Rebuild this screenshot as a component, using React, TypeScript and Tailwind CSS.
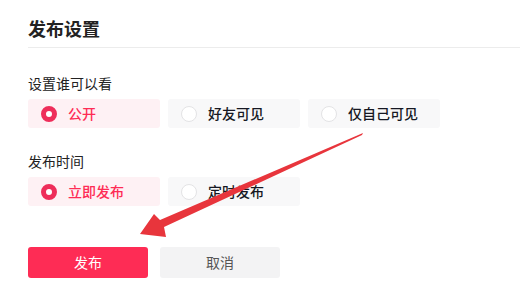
import React, { useState } from 'react';

const font = { fontFamily: '"Noto Sans CJK SC", "Noto Sans", sans-serif' };

interface Option {
  value: string;
  label: string;
}

function RadioGroup({ options, value, onChange }: { options: Option[]; value: string; onChange: (v: string) => void }) {
  return (
    <div className="flex gap-2">
      {options.map((opt) => {
        const active = opt.value === value;
        return (
          <button
            key={opt.value}
            onClick={() => onChange(opt.value)}
            className={`flex items-center w-[132px] h-[29px] rounded-[3px] pl-[13px] text-[14px] font-medium ${
              active ? 'bg-[#fef1f4] text-[#fe2c55]' : 'bg-[#f8f8f9] text-[#161823]'
            }`}
          >
            <span
              className={`w-4 h-4 rounded-full flex-shrink-0 mr-[11px] ${
                active ? 'border-[5px] border-[#ee2e5a] bg-white' : 'border border-[#e3e3e5] bg-white'
              }`}
            />
            {opt.label}
          </button>
        );
      })}
    </div>
  );
}

export default function App() {
  const [visibility, setVisibility] = useState('public');
  const [timing, setTiming] = useState('now');

  return (
    <div className="relative w-[520px] h-[307px] bg-white overflow-hidden" style={font}>
      <div className="pl-[28px] pt-[14px]">
        {/* Header */}
        <h1 className="text-[18px] leading-[28px] font-bold text-[#222] pb-[5px] border-b border-[#ececec]">发布设置</h1>

        {/* Visibility */}
        <div className="mt-[24px] text-[14px] leading-[22px] text-[#222]">设置谁可以看</div>
        <div className="mt-[5px]">
          <RadioGroup
            value={visibility}
            onChange={setVisibility}
            options={[
              { value: 'public', label: '公开' },
              { value: 'friends', label: '好友可见' },
              { value: 'private', label: '仅自己可见' },
            ]}
          />
        </div>

        {/* Publish time */}
        <div className="mt-[22px] text-[14px] leading-[22px] text-[#222]">发布时间</div>
        <div className="mt-[5px]">
          <RadioGroup
            value={timing}
            onChange={setTiming}
            options={[
              { value: 'now', label: '立即发布' },
              { value: 'scheduled', label: '定时发布' },
            ]}
          />
        </div>

        {/* Actions */}
        <div className="flex gap-3 mt-[41px]">
          <button className="w-[120px] h-[31px] rounded-[3px] bg-[#fe2c55] text-white text-[14px]">发布</button>
          <button className="w-[120px] h-[31px] rounded-[3px] bg-[#f3f3f4] text-[#555] text-[14px]">取消</button>
        </div>
      </div>

      {/* Annotation arrow */}
      <svg className="absolute left-0 top-0 pointer-events-none" width="520" height="307" viewBox="0 0 520 307">
        <polygon
          points="363,133 362,135 164,227 166,237 140,234 154,214 160,220"
          fill="#e8353c"
        />
      </svg>
    </div>
  );
}
